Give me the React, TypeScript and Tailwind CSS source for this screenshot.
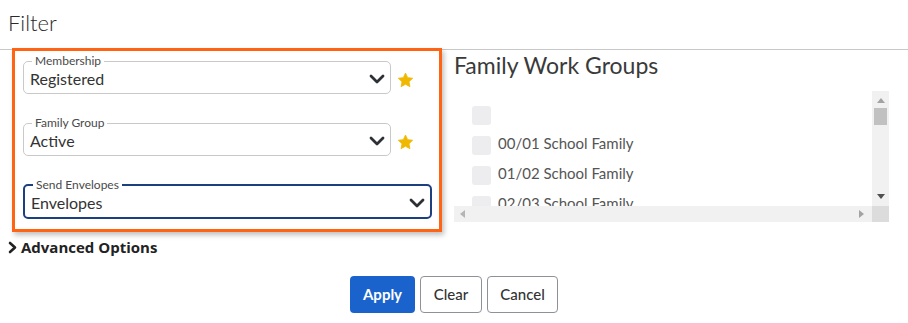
import React from "react";

const font = { fontFamily: "Lato, 'Open Sans', sans-serif" };

function Chevron({ className = "" }: { className?: string }) {
  return (
    <svg width="16" height="10" viewBox="0 0 16 10" className={className}>
      <path d="M2 2 L8 8 L14 2" fill="none" stroke="#2d3035" strokeWidth="2.8" strokeLinecap="round" strokeLinejoin="round" />
    </svg>
  );
}

function Star() {
  return (
    <svg width="17" height="16" viewBox="0 0 24 23">
      <path d="M12 1.5l3.1 6.6 7.2.9-5.3 5 1.4 7.1L12 17.6l-6.4 3.5L7 14l-5.3-5 7.2-.9z" fill="#f0b800" stroke="#f0b800" strokeWidth="1.2" strokeLinejoin="round" />
    </svg>
  );
}

function OutlineSelect({ label, value, focused = false }: { label: string; value: string; focused?: boolean }) {
  return (
    <fieldset
      className={
        focused
          ? "flex-1 border-2 border-[#1c3f7e] rounded-[5px] pl-[6px] pr-[5px] pb-[4px]"
          : "flex-1 border border-[#c9c9c9] rounded-[5px] pl-[6px] pr-[5px] pb-[4px]"
      }
    >
      <legend className="ml-[2px] px-[3px] text-[12px] leading-[12px] text-[#4a4a4a]">{label}</legend>
      <div className="flex items-center justify-between pt-[2px] h-[22px]">
        <span className="text-[16px] leading-[20px] text-[#333]">{value}</span>
        <Chevron />
      </div>
    </fieldset>
  );
}

function Checkbox() {
  return <div className="w-[19px] h-[19px] rounded-[3px] bg-[#ededef] shrink-0" />;
}

export default function App() {
  const rows = ["", "00/01 School Family", "01/02 School Family", "02/03 School Family"];
  return (
    <div className="w-[908px] h-[323px] bg-white text-[#333] overflow-hidden" style={font}>
      <div className="h-[50px] border-b border-[#c8c8c8] pl-[8px] pt-[9px]">
        <h1 className="text-[22px] leading-[28px] font-light text-[#2a2a2a]">Filter</h1>
      </div>
      <div className="flex pl-[12px] -mt-[2px]">
        <div className="w-[430px] border-[3px] border-[#ff6414] bg-white shadow-[2px_3px_5px_rgba(0,0,0,0.25)] pl-[8px] pr-[7px] pt-[4px] pb-[10px] flex flex-col gap-[23px]">
          <div className="flex items-start gap-[6px] pr-[35px]">
            <OutlineSelect label="Membership" value="Registered" />
            <div className="w-0 relative">
              <div className="absolute left-0 top-[17px]"><Star /></div>
            </div>
          </div>
          <div className="flex items-start gap-[6px] pr-[35px]">
            <OutlineSelect label="Family Group" value="Active" />
            <div className="w-0 relative">
              <div className="absolute left-0 top-[17px]"><Star /></div>
            </div>
          </div>
          <div className="flex">
            <OutlineSelect label="Send Envelopes" value="Envelopes" focused />
          </div>
        </div>
        <div className="ml-[12px] pt-[3px] w-[435px]">
          <h2 className="text-[23px] leading-[28px] text-[#3a3a3a]">Family Work Groups</h2>
          <div className="mt-[12px] h-[131px] flex flex-col">
            <div className="flex h-[115px]">
              <div className="flex-1 overflow-hidden pl-[18px] pt-[15px] flex flex-col gap-[11px]">
                {rows.map((r, i) => (
                  <div key={i} className="flex items-start gap-[7px] h-[19px]">
                    <Checkbox />
                    <span className="text-[15px] leading-[15px] text-[#555]">{r}</span>
                  </div>
                ))}
              </div>
              <div className="w-[17px] bg-[#f1f1f1] flex flex-col items-center">
                <svg width="8" height="5" viewBox="0 0 8 5" className="mt-[7px]"><path d="M0 5 L4 0 L8 5Z" fill="#a3a3a3" /></svg>
                <div className="mt-[5px] w-[13px] h-[17px] bg-[#c1c1c1]" />
                <div className="flex-1" />
                <svg width="8" height="5" viewBox="0 0 8 5" className="mb-[7px]"><path d="M0 0 L4 5 L8 0Z" fill="#505050" /></svg>
              </div>
            </div>
            <div className="flex h-[16px]">
              <div className="flex-1 bg-[#f1f1f1] flex items-center justify-between px-[6px]">
                <svg width="5" height="8" viewBox="0 0 5 8"><path d="M5 0 L0 4 L5 8Z" fill="#b5b5b5" /></svg>
                <svg width="5" height="8" viewBox="0 0 5 8" className="mr-[2px]"><path d="M0 0 L5 4 L0 8Z" fill="#a3a3a3" /></svg>
              </div>
              <div className="w-[17px] bg-[#dcdcdc]" />
            </div>
          </div>
        </div>
      </div>
      <div className="flex items-center gap-[4px] pl-[8px] mt-[5px] h-[20px]">
        <svg width="9" height="13" viewBox="0 0 9 13"><path d="M2 2 L7 6.5 L2 11" fill="none" stroke="#222" strokeWidth="2.6" strokeLinecap="round" strokeLinejoin="round" /></svg>
        <span className="text-[15px] font-bold text-[#222]" style={{ fontFamily: "'Open Sans', sans-serif" }}>Advanced Options</span>
      </div>
      <div className="flex justify-center gap-[5px] mt-[19px]">
        <button className="h-[37px] w-[65px] rounded-[4px] bg-[#1a63cc] text-white text-[15px] font-bold">Apply</button>
        <button className="h-[37px] w-[62px] rounded-[4px] border border-[#8e9197] bg-white text-[#333] text-[15px] font-medium">Clear</button>
        <button className="h-[37px] w-[71px] rounded-[4px] border border-[#8e9197] bg-white text-[#333] text-[15px] font-medium">Cancel</button>
      </div>
    </div>
  );
}
